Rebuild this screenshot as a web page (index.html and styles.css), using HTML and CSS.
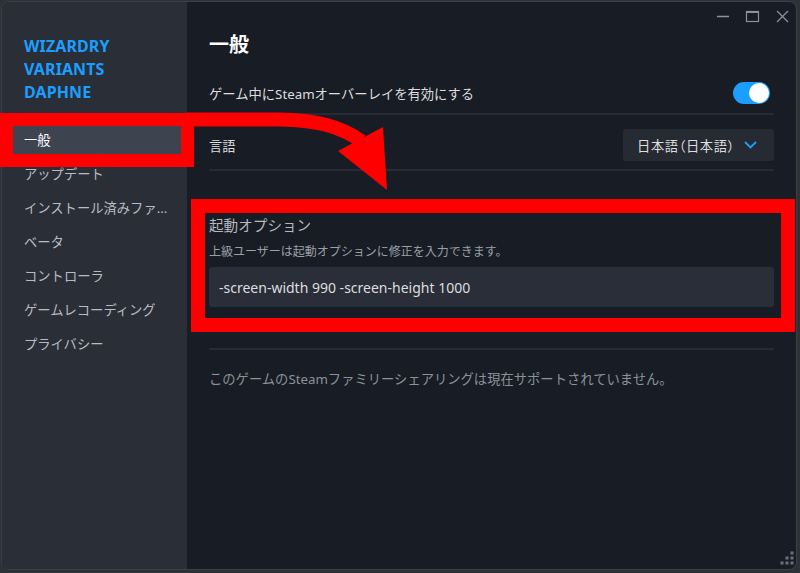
FILE: index.html
```html
<!DOCTYPE html>
<html lang="ja">
<head>
<meta charset="utf-8">
<title>Steam プロパティ</title>
<link rel="stylesheet" href="styles.css">
</head>
<body>
<div class="window">
  <aside class="sidebar">
    <div class="game-title">WIZARDRY VARIANTS DAPHNE</div>
    <nav class="nav">
      <div class="nav-item active">一般</div>
      <div class="nav-item">アップデート</div>
      <div class="nav-item">インストール済みファ...</div>
      <div class="nav-item">ベータ</div>
      <div class="nav-item">コントローラ</div>
      <div class="nav-item">ゲームレコーディング</div>
      <div class="nav-item">プライバシー</div>
    </nav>
  </aside>
  <main class="main">
    <h1 class="page-title">一般</h1>
    <div class="row row-toggle">
      <span class="label">ゲーム中にSteamオーバーレイを有効にする</span>
      <span class="toggle"><span class="knob"></span></span>
    </div>
    <div class="row row-lang">
      <span class="label">言語</span>
      <div class="select">
        <span class="select-text">日本語（日本語）</span>
        <svg class="chevron" width="13" height="8" viewBox="0 0 13 8"><polyline points="1,1 6.5,6.5 12,1" fill="none" stroke="#1a9fff" stroke-width="1.8"/></svg>
      </div>
    </div>
    <section class="launch">
      <div class="launch-title">起動オプション</div>
      <div class="launch-desc">上級ユーザーは起動オプションに修正を入力できます。</div>
      <div class="input">-screen-width 990 -screen-height 1000</div>
    </section>
    <div class="divider"></div>
    <div class="note">このゲームのSteamファミリーシェアリングは現在サポートされていません。</div>
  </main>
  <svg class="controls" width="100" height="30" viewBox="0 0 100 30">
    <line x1="21" y1="14.5" x2="33" y2="14.5" stroke="#8b929a" stroke-width="1.3"/>
    <rect x="50.5" y="9.5" width="12" height="10" fill="none" stroke="#8b929a" stroke-width="1.2"/>
    <line x1="50.5" y1="10.2" x2="62.5" y2="10.2" stroke="#8b929a" stroke-width="1.6"/>
    <line x1="81" y1="9" x2="92" y2="20" stroke="#8b929a" stroke-width="1.3"/>
    <line x1="92" y1="9" x2="81" y2="20" stroke="#8b929a" stroke-width="1.3"/>
  </svg>
  <svg class="grip" width="20" height="20" viewBox="0 0 20 20">
    <g fill="#6b717c">
      <rect x="14.5" y="2.5" width="3" height="3"/>
      <rect x="9.5" y="7.5" width="3" height="3"/>
      <rect x="14.5" y="7.5" width="3" height="3"/>
      <rect x="4.5" y="12.5" width="3" height="3"/>
      <rect x="9.5" y="12.5" width="3" height="3"/>
      <rect x="14.5" y="12.5" width="3" height="3"/>
    </g>
  </svg>
</div>
<svg class="annot" width="800" height="573" viewBox="0 0 800 573">
  <rect x="6.5" y="119.5" width="181" height="41" fill="none" stroke="#ff0000" stroke-width="13"/>
  <rect x="198" y="206" width="590" height="119" fill="none" stroke="#ff0000" stroke-width="14"/>
  <path d="M 186 119.5 L 280 119.5 C 315 120 340 126 361 141" fill="none" stroke="#ff0000" stroke-width="14"/>
  <polygon points="338,151 383,127 387,190" fill="#ff0000"/>
</svg>
</body>
</html>
```

FILE: styles.css
```css
* {
  box-sizing: border-box;
}

html, body {
  margin: 0;
  height: 100%;
}

body {
  background: #2e3136;
  padding: 1px 3px 3px 1px;
  font-family: "Noto Sans", "Noto Sans CJK JP", sans-serif;
  overflow: hidden;
}

.window {
  position: relative;
  width: 796px;
  height: 569px;
  border: 1px solid #3b3f47;
  border-radius: 8px;
  overflow: hidden;
  display: flex;
  background: #181c24;
}

.sidebar {
  width: 185px;
  flex: none;
  background: #2a2e37;
  padding-top: 33px;
}

.game-title {
  margin-left: 22px;
  width: 130px;
  color: #1a9fff;
  font-weight: 700;
  font-size: 16px;
  line-height: 23px;
  letter-spacing: 0.1px;
}

.nav {
  margin-top: 20px;
  display: flex;
  flex-direction: column;
  gap: 2px;
}

.nav-item {
  margin-left: 11px;
  margin-right: 6px;
  height: 32px;
  line-height: 32px;
  padding: 0 4px 0 11px;
  font-size: 13.3px;
  color: #b8bcc1;
  white-space: nowrap;
  border-radius: 2px;
}

.nav-item.active {
  background: #3d4450;
  color: #ffffff;
}

.main {
  flex: 1;
  padding: 29px 22px 0 22px;
}

.page-title {
  margin: 0;
  font-size: 20px;
  line-height: 28px;
  font-weight: 700;
  color: #ffffff;
}

.row {
  display: flex;
  align-items: center;
  justify-content: space-between;
  border-bottom: 2px solid #262b34;
}

.label {
  font-size: 13.3px;
  color: #dcdedf;
}

.row-toggle {
  margin-top: 16px;
  height: 40px;
  padding-bottom: 2px;
}

.toggle {
  width: 37px;
  height: 22px;
  border-radius: 11px;
  background: #1a9fff;
  margin-right: 4px;
  display: flex;
  justify-content: flex-end;
  align-items: center;
  padding-right: 1px;
}

.knob {
  width: 20px;
  height: 20px;
  border-radius: 50%;
  background: #ffffff;
}

.row-lang {
  padding: 14px 0 8px;
}

.select {
  width: 151px;
  height: 32px;
  background: #262a33;
  border-radius: 3px;
  display: flex;
  align-items: center;
  justify-content: space-between;
  padding: 0 17px 0 14px;
}

.select-text {
  font-size: 13.3px;
  color: #dcdedf;
  font-feature-settings: "palt";
  letter-spacing: 0.6px;
}

.chevron {
  display: block;
}

.launch {
  margin-top: 44px;
}

.launch-title {
  font-size: 14.6px;
  line-height: 20px;
  color: #b4b9bf;
}

.launch-desc {
  margin-top: 8px;
  font-size: 12px;
  line-height: 18px;
  color: #9aa0a7;
}

.input {
  margin-top: 6px;
  height: 40px;
  background: #2a2e38;
  border-radius: 3px;
  display: flex;
  align-items: center;
  padding-left: 10px;
  font-size: 14px;
  color: #dcdedf;
}

.divider {
  margin-top: 41px;
  border-top: 2px solid #262b34;
}

.note {
  margin-top: 19px;
  font-size: 13.3px;
  line-height: 20px;
  color: #8b929a;
}

.controls {
  position: absolute;
  top: 0;
  right: 0;
}

.grip {
  position: absolute;
  right: 0;
  bottom: 0;
}

.annot {
  position: absolute;
  left: 0;
  top: 0;
  pointer-events: none;
}
```
